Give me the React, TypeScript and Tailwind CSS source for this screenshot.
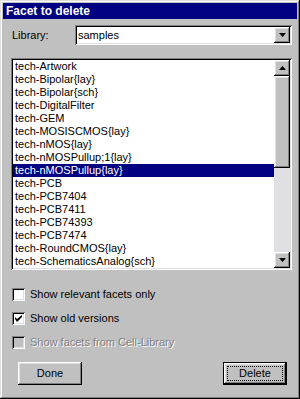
import React from "react";

const items = [
  "tech-Artwork",
  "tech-Bipolar{lay}",
  "tech-Bipolar{sch}",
  "tech-DigitalFilter",
  "tech-GEM",
  "tech-MOSISCMOS{lay}",
  "tech-nMOS{lay}",
  "tech-nMOSPullup;1{lay}",
  "tech-nMOSPullup{lay}",
  "tech-PCB",
  "tech-PCB7404",
  "tech-PCB7411",
  "tech-PCB74393",
  "tech-PCB7474",
  "tech-RoundCMOS{lay}",
  "tech-SchematicsAnalog{sch}",
];

const raised =
  "shadow-[inset_-1px_-1px_#000,inset_1px_1px_#fff,inset_-2px_-2px_#808080,inset_2px_2px_#dfdfdf]";
const sunken =
  "shadow-[inset_1px_1px_#808080,inset_-1px_-1px_#fff,inset_2px_2px_#000,inset_-2px_-2px_#dfdfdf]";

const Arrow = ({ down }: { down?: boolean }) => (
  <svg width="7" height="4" viewBox="0 0 7 4">
    <path d={down ? "M0 0h7L3.5 4z" : "M0 4h7L3.5 0z"} fill="#000" />
  </svg>
);

const Checkbox = ({
  label,
  checked,
  disabled,
}: {
  label: string;
  checked?: boolean;
  disabled?: boolean;
}) => (
  <div className="flex h-[13px] items-center">
    <div
      className={`ml-[1px] flex h-[13px] w-[13px] items-center justify-center ${sunken} ${
        disabled ? "bg-[#c0c0c0]" : "bg-white"
      }`}
    >
      {checked && (
        <svg width="7" height="7" viewBox="0 0 7 7">
          <path d="M0 2l2 2 5-4v2l-5 5-2-3z" fill="#000" />
        </svg>
      )}
    </div>
    <span
      className={`ml-[5px] text-[11px] leading-[13px] ${
        disabled ? "text-[#808080] [text-shadow:1px_1px_0_#fff]" : "text-black"
      }`}
    >
      {label}
    </span>
  </div>
);

export default function App() {
  return (
    <div
      className={`flex h-[399px] w-[300px] flex-col bg-[#c0c0c0] p-[3px] font-['Liberation_Sans',Arial,sans-serif] shadow-[inset_-1px_-1px_#000,inset_1px_1px_#dfdfdf,inset_-2px_-2px_#808080,inset_2px_2px_#fff]`}
    >
      <div className="flex h-[16px] items-center bg-[#000080] pl-[3px] text-[12px] font-bold text-white">
        Facet to delete
      </div>

      <div className="flex flex-col pl-[8px] pr-[5px]">
        <div className="mt-[6px] flex items-center">
          <span className="ml-[1px] w-[63px] text-[11px] text-black">Library:</span>
          <div className={`flex h-[20px] flex-1 items-center bg-white p-[2px] ${sunken}`}>
            <span className="flex-1 pl-[1px] text-[11px] text-black">samples</span>
            <div className={`flex h-[16px] w-[16px] items-center justify-center bg-[#c0c0c0] ${raised}`}>
              <Arrow down />
            </div>
          </div>
        </div>

        <div className={`mt-[13px] flex h-[212px] bg-white p-[2px] ${sunken}`}>
          <div className="flex flex-1 flex-col">
            {items.map((it, i) => (
              <div
                key={it}
                className={`h-[13px] pl-[2px] text-[11px] leading-[13px] whitespace-nowrap ${
                  i === 8 ? "bg-[#000080] text-white" : "text-black"
                }`}
              >
                {it}
              </div>
            ))}
          </div>
          <div className="flex w-[16px] flex-col bg-[#e0dfe3]">
            <div className={`flex h-[16px] items-center justify-center bg-[#c0c0c0] ${raised}`}>
              <Arrow />
            </div>
            <div className={`h-[92px] bg-[#c0c0c0] ${raised}`} />
            <div className="flex-1" />
            <div className={`flex h-[16px] items-center justify-center bg-[#c0c0c0] ${raised}`}>
              <Arrow down />
            </div>
          </div>
        </div>

        <div className="mt-[18px] flex flex-col gap-[11px]">
          <Checkbox label="Show relevant facets only" />
          <Checkbox label="Show old versions" checked />
          <Checkbox label="Show facets from Cell-Library" disabled />
        </div>

        <div className="mt-[13px] flex justify-between pl-[7px] pr-[5px]">
          <button className={`h-[23px] w-[64px] bg-[#c0c0c0] text-[11px] text-black ${raised}`}>
            Done
          </button>
          <button className="h-[23px] w-[64px] border border-black bg-[#c0c0c0] p-0">
            <div
              className={`flex h-full w-full items-center justify-center p-[3px] ${raised}`}
            >
              <div className="flex h-full w-full items-center justify-center border border-dotted border-black text-[11px] text-black">
                Delete
              </div>
            </div>
          </button>
        </div>
      </div>
    </div>
  );
}
